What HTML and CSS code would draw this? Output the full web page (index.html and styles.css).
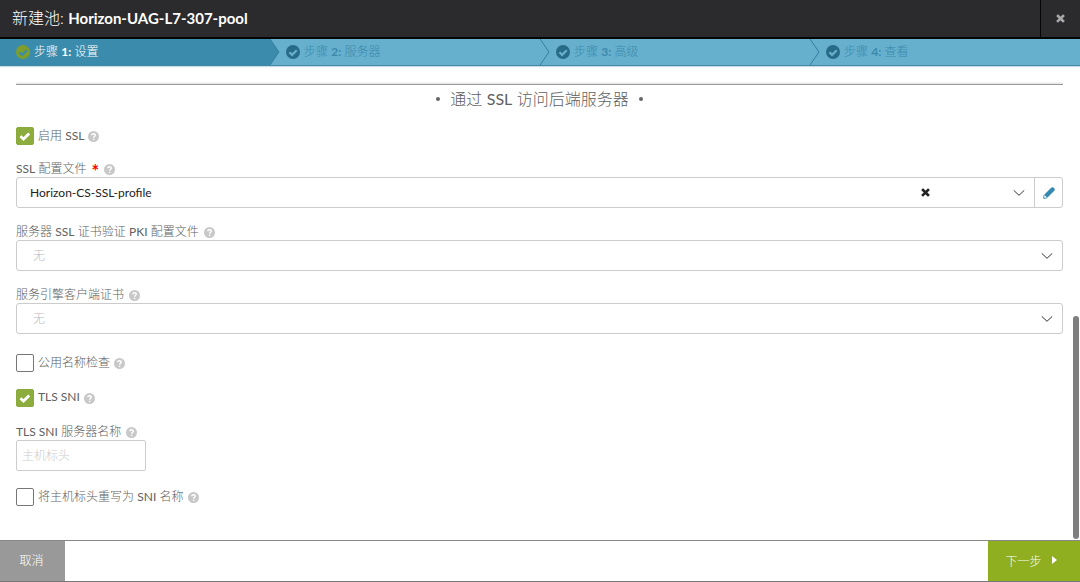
FILE: index.html
```
<!DOCTYPE html>
<html lang="zh-CN">
<head>
<meta charset="utf-8">
<title>新建池</title>
<link rel="stylesheet" href="styles.css">
</head>
<body>
<svg class="defs" aria-hidden="true">
  <symbol id="ok" viewBox="0 0 14 14"><circle class="disc" cx="7" cy="7" r="7"/><path class="tick" d="M3.4 7.2 6.1 9.9 10.8 5.2"/></symbol>
  <symbol id="check" viewBox="0 0 14 14"><path d="M2.4 7.2 5.5 10 11.2 4.5"/></symbol>
  <symbol id="help" viewBox="0 0 10 10"><circle cx="5" cy="5" r="5" fill="#c8c8c8"/><path d="M3.4 3.9C3.5 2.1 6.7 2.1 6.6 3.9 6.6 4.9 5.1 4.9 5.1 6.1M5.1 7v1.2" fill="none" stroke="#fff" stroke-width="1.3"/></symbol>
  <symbol id="close" viewBox="0 0 10 10"><path d="M2.2 2.2 7.8 7.8M7.8 2.2 2.2 7.8" fill="none" stroke="currentColor" stroke-width="2.9" stroke-linecap="square"/></symbol>
  <symbol id="down" viewBox="0 0 12 8"><path d="M.8 1.4 6 6.3 11.2 1.4" fill="none" stroke="currentColor" stroke-width="1"/></symbol>
  <symbol id="sep" viewBox="0 0 10 26" preserveAspectRatio="none"><path class="body" d="M0 0 9 13 0 26Z"/><path class="edge" d="M0 0 9 13 0 26"/></symbol>
</svg>
<div class="dialog">
  <header class="header">
    <h1 class="title">新建池: <b>Horizon-UAG-L7-307-pool</b></h1>
    <button class="close" type="button" aria-label="关闭"><svg class="x"><use href="#close"/></svg></button>
  </header>
  <ol class="steps">
    <li class="step active"><svg class="ok"><use href="#ok"/></svg><span>步骤 <b>1:</b> 设置</span><svg class="sep"><use href="#sep"/></svg></li>
    <li class="step"><svg class="ok"><use href="#ok"/></svg><span>步骤 <b>2:</b> 服务器</span><svg class="sep"><use href="#sep"/></svg></li>
    <li class="step"><svg class="ok"><use href="#ok"/></svg><span>步骤 <b>3:</b> 高级</span><svg class="sep"><use href="#sep"/></svg></li>
    <li class="step"><svg class="ok"><use href="#ok"/></svg><span>步骤 <b>4:</b> 查看</span></li>
  </ol>
  <main class="content">
    <h2 class="section"><span class="dot"></span><span>通过 <b>SSL</b> 访问后端服务器</span><span class="dot"></span></h2>
    <form class="form" id="pool">
      <div class="check">
        <span class="box"><input type="checkbox" id="ssl" checked><svg class="mark"><use href="#check"/></svg></span>
        <label for="ssl">启用 <b>SSL</b></label><svg class="help"><use href="#help"/></svg>
      </div>
      <div class="field">
        <div class="caption"><label for="profile"><b>SSL</b> 配置文件</label><span class="required">*</span><svg class="help"><use href="#help"/></svg></div>
        <div class="control">
          <div class="picker">
            <select id="profile"><option>Horizon-CS-SSL-profile</option></select>
            <button class="clear" type="button" aria-label="清除"><svg class="x"><use href="#close"/></svg></button>
            <svg class="down"><use href="#down"/></svg>
          </div>
          <button class="edit" type="button" aria-label="编辑">
            <svg class="pencil" viewBox="0 0 12 12"><path d="M1.2 7.8 7.9 1.1C8.8 0 10 0 11 .9 12 1.9 12 3.2 11 4.1L4.3 10.8Z" fill="#3288ae"/><path d="M1.1 8 .6 11.4 4 10.9" fill="#fff" stroke="#3288ae" stroke-width=".9"/></svg>
          </button>
        </div>
      </div>
      <div class="field">
        <div class="caption"><label for="pki">服务器 <b>SSL</b> 证书验证 <b>PKI</b> 配置文件</label><svg class="help"><use href="#help"/></svg></div>
        <div class="control"><div class="picker"><select class="empty" id="pki"><option>无</option></select><svg class="down"><use href="#down"/></svg></div></div>
      </div>
      <div class="field">
        <div class="caption"><label for="cert">服务引擎客户端证书</label><svg class="help"><use href="#help"/></svg></div>
        <div class="control"><div class="picker"><select class="empty" id="cert"><option>无</option></select><svg class="down"><use href="#down"/></svg></div></div>
      </div>
      <div class="group">
        <div class="check">
          <span class="box"><input type="checkbox" id="cn"></span>
          <label for="cn">公用名称检查</label><svg class="help"><use href="#help"/></svg>
        </div>
        <div class="check">
          <span class="box"><input type="checkbox" id="sni" checked><svg class="mark"><use href="#check"/></svg></span>
          <label for="sni"><b>TLS SNI</b></label><svg class="help"><use href="#help"/></svg>
        </div>
        <div class="field">
          <div class="caption"><label for="name"><b>TLS SNI</b> 服务器名称</label><svg class="help"><use href="#help"/></svg></div>
          <input class="text" id="name" type="text" placeholder="主机标头">
        </div>
        <div class="check">
          <span class="box"><input type="checkbox" id="rewrite"></span>
          <label for="rewrite">将主机标头重写为 <b>SNI</b> 名称</label><svg class="help"><use href="#help"/></svg>
        </div>
      </div>
    </form>
    <div class="thumb"></div>
  </main>
  <footer class="footer">
    <button class="cancel" type="button">取消</button>
    <button class="next" type="submit" form="pool">下一步<svg class="arrow" viewBox="0 0 5 8"><path d="M0 0 5 4 0 8Z" fill="#fff"/></svg></button>
  </footer>
</div>
</body>
</html>
```

FILE: styles.css
```
* { box-sizing: border-box; }

body,
button,
input,
select {
  font-family: Lato, "Noto Sans CJK SC", sans-serif;
  font-size: 12px;
  font-weight: 300;
}

body {
  margin: 0;
  color: #606060;
  background: #fff;
}

b { font-weight: 400; }
button { padding: 0; border: 0; background: none; cursor: pointer; }
.defs { position: absolute; width: 0; height: 0; }

.dialog {
  display: flex;
  flex-direction: column;
  height: 100vh;
  border-bottom: 1px solid #777;
}

/* Header */
.header {
  display: flex;
  flex: none;
  height: 39px;
  background: #2b2b2d;
  border-bottom: 2px solid #050505;
}

.title {
  flex: 1;
  margin: 0;
  padding-left: 12px;
  color: #fff;
  font-size: 16px;
  font-weight: 300;
  line-height: 36px;
}

.title b { font-size: 15px; font-weight: 700; }

.close {
  display: flex;
  align-items: center;
  justify-content: center;
  width: 40px;
  border-left: 1px solid #050505;
  color: #a9a9a9;
}

.x { display: block; width: 9px; height: 9px; }

/* Steps */
.steps {
  display: grid;
  grid-template-columns: repeat(4, 1fr);
  flex: none;
  height: 27px;
  margin: 0;
  padding: 0;
  list-style: none;
  background: #66afcd;
  border-bottom: 1px solid #4289a6;
  box-shadow: 0 1px 1px #c9dde6;
}

.step {
  position: relative;
  display: flex;
  align-items: center;
  gap: 4px;
  padding-left: 16px;
  color: #3b8aac;
  line-height: 26px;
}

.active { color: #fff; background: #3b8cac; }
.step b { font-weight: 700; }
.ok { width: 14px; height: 14px; }
.disc { fill: currentColor; }
.step .ok { color: #286b88; --tick: #66afcd; }
.active .ok { color: #7f9e2c; --tick: #3b8cac; }
.tick { fill: none; stroke: var(--tick); stroke-width: 2.2; }

.sep {
  position: absolute;
  z-index: 1;
  top: 0;
  left: 100%;
  width: 10px;
  height: 100%;
  --body: #66afcd;
}

.active .sep { --body: #3b8cac; }
.body { fill: var(--body); }
.edge { fill: none; stroke: #347f9e; stroke-width: 1; }

/* Content */
.content {
  position: relative;
  flex: 1;
  min-height: 0;
  padding: 18px 17px 0 16px;
}

.section {
  display: flex;
  align-items: center;
  justify-content: center;
  gap: 10px;
  margin: 0 0 16px;
  border-top: 1px solid #999;
  box-shadow: 0 -1px 2px #ddd;
  font-size: 16px;
  font-weight: 300;
  line-height: 24px;
  padding: 2px 0 0;
  clip-path: inset(-3px 0 0);
}

.dot { width: 4px; height: 4px; border-radius: 50%; background: #666; }

.form { display: flex; flex-direction: column; gap: 16px; }

.group {
  display: flex;
  flex-direction: column;
  gap: 17px;
  margin-top: 4px;
}

.check,
.caption { display: flex; align-items: center; }

.check { height: 18px; gap: 4px; }
.check label { padding-bottom: 3px; }
.caption { height: 16px; gap: 5px; line-height: 16px; }
.help { width: 11px; height: 11px; }

.required {
  height: 16px;
  color: #f00;
  font-size: 18px;
  font-weight: 700;
  line-height: 20px;
}

.box { display: grid; width: 18px; height: 18px; }
.box > * { grid-area: 1 / 1; }

.box input {
  width: 18px;
  height: 18px;
  margin: 0;
  border: 1px solid #777;
  border-radius: 2px;
  background: #fff;
  appearance: none;
}

.box input:checked { border-color: #8aab3c; background: #8cad3e; }

.mark {
  width: 14px;
  height: 14px;
  margin: 2px;
  fill: none;
  stroke: #fff;
  stroke-width: 2.8;
  pointer-events: none;
}

.control {
  display: flex;
  height: 31px;
  border: 1px solid #ccc;
  border-radius: 3px;
}

.picker { display: grid; flex: 1; align-items: center; }
.picker > * { grid-area: 1 / 1; }

.picker select {
  width: 100%;
  height: 29px;
  padding: 0 14px 0 13px;
  border: 0;
  background: transparent;
  color: #222;
  font-weight: 400;
  appearance: none;
}

.picker .empty { padding-left: 16px; color: #bbb; font-weight: 300; }

.clear { justify-self: end; margin-right: 104px; color: #222; }

.down {
  justify-self: end;
  width: 12px;
  height: 8px;
  margin-right: 9px;
  color: #333;
  pointer-events: none;
}

.edit {
  display: flex;
  align-items: center;
  justify-content: center;
  width: 28px;
  border-left: 1px solid #ccc;
}

.pencil { width: 12px; height: 12px; }

.text {
  display: block;
  width: 130px;
  height: 31px;
  padding: 0 5px;
  border: 1px solid #ccc;
  border-radius: 2px;
}

.text::placeholder { color: #ccc; }

.thumb {
  position: absolute;
  right: 1px;
  bottom: 1px;
  width: 6px;
  height: 47%;
  border-radius: 3px;
  background: #7f7f7f;
}

/* Footer */
.footer {
  display: flex;
  flex: none;
  justify-content: space-between;
  height: 41px;
  border-top: 1px solid #888;
}

.cancel { width: 65px; padding: 0 2px 3px 0; color: #fff; background: #999; }

.next {
  display: flex;
  align-items: center;
  justify-content: center;
  gap: 10px;
  width: 92px;
  padding: 0 6px 2px 0;
  color: #fff;
  background: #8fae20;
}

.arrow { width: 5px; height: 8px; }
```
